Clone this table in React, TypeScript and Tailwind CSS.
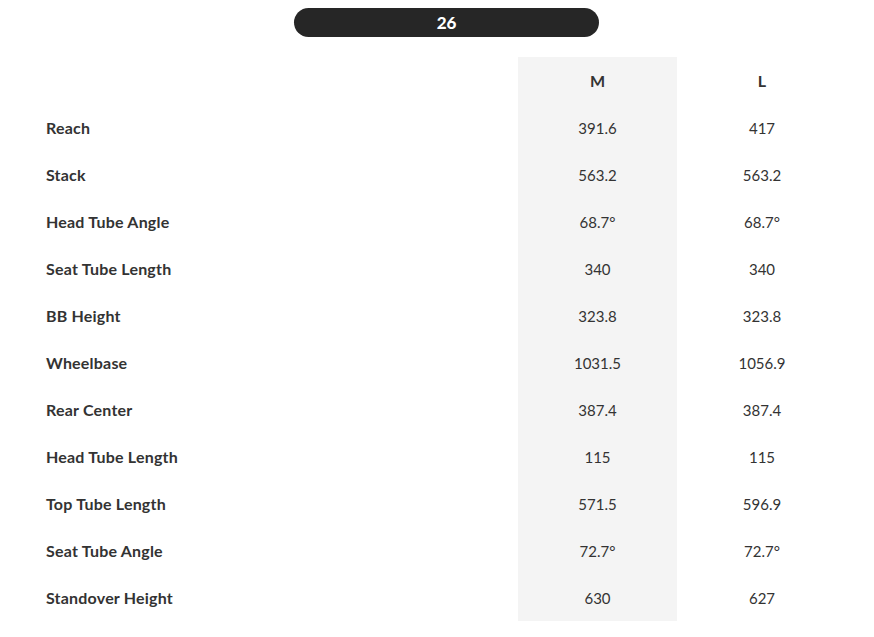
import React from 'react';

const rows: [string, string, string][] = [
  ['Reach', '391.6', '417'],
  ['Stack', '563.2', '563.2'],
  ['Head Tube Angle', '68.7°', '68.7°'],
  ['Seat Tube Length', '340', '340'],
  ['BB Height', '323.8', '323.8'],
  ['Wheelbase', '1031.5', '1056.9'],
  ['Rear Center', '387.4', '387.4'],
  ['Head Tube Length', '115', '115'],
  ['Top Tube Length', '571.5', '596.9'],
  ['Seat Tube Angle', '72.7°', '72.7°'],
  ['Standover Height', '630', '627'],
];

export default function App() {
  return (
    <div className="w-[874px] h-[637px] bg-white text-[#333] font-['Lato',sans-serif] text-[15px]">
      <div className="ml-[30px] w-[833px] pt-2">
        <div className="flex justify-center">
          <div className="w-[305px] h-[29px] rounded-full bg-[#262626] text-white text-[17px] font-black flex items-center justify-center">
            26
          </div>
        </div>
        <div className="mt-5 grid grid-cols-[488px_159px_170px]">
          <div className="h-[47px]" />
          <div className="h-[47px] bg-[#f4f4f4] flex items-center justify-center font-bold text-[16px]">M</div>
          <div className="h-[47px] flex items-center justify-center font-bold text-[16px]">L</div>
          {rows.map(([label, m, l]) => (
            <React.Fragment key={label}>
              <div className="h-[47px] flex items-center pl-4 font-bold text-[16px] tracking-[0.2px]">{label}</div>
              <div className="h-[47px] bg-[#f4f4f4] flex items-center justify-center pt-0.5">{m}</div>
              <div className="h-[47px] flex items-center justify-center pt-0.5">{l}</div>
            </React.Fragment>
          ))}
        </div>
      </div>
    </div>
  );
}
